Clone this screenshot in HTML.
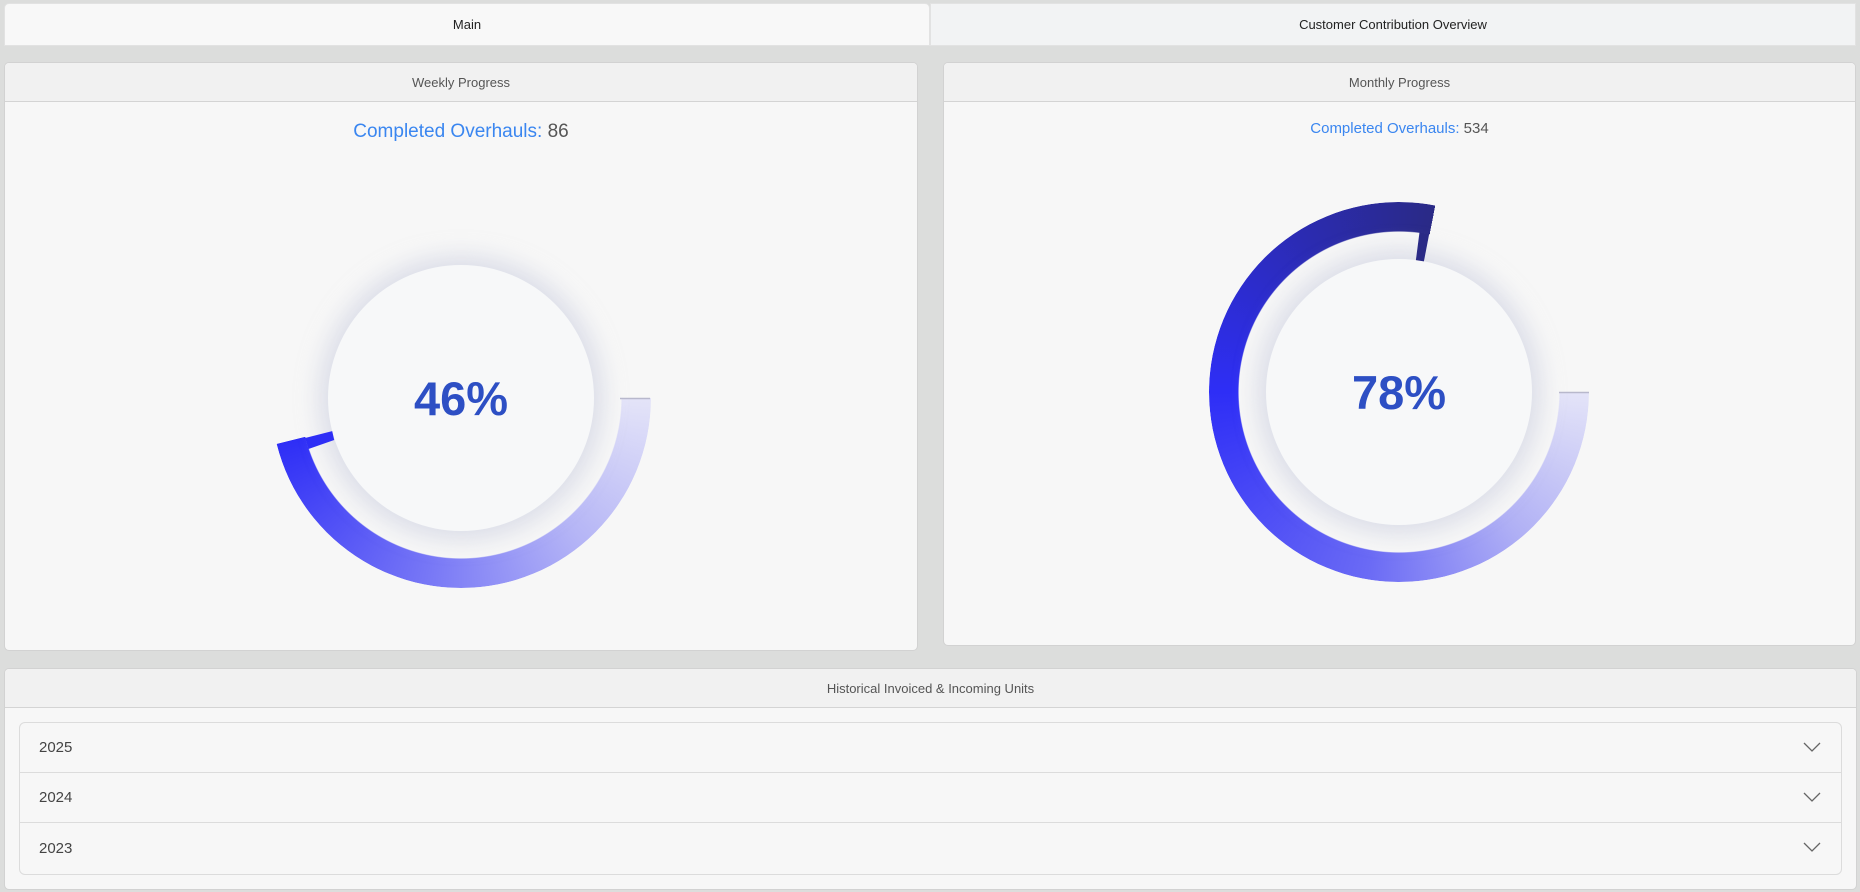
<!DOCTYPE html>
<html><head><meta charset="utf-8"><style>
*{box-sizing:border-box;margin:0;padding:0}
body{width:1860px;height:892px;background:#dcdddc;font-family:"Liberation Sans",sans-serif;position:relative;overflow:hidden}
.abs{position:absolute}
.tab{position:absolute;top:3px;height:43px;display:flex;align-items:center;justify-content:center;font-size:13px;color:#222;border:1px solid #e2e2e2}
.panel{position:absolute;background:#f7f7f7;border:1px solid #d2d2d2;border-radius:5px;overflow:hidden}
.ph{height:39px;background:#f1f1f1;border-bottom:1px solid #d4d4d4;display:flex;align-items:center;justify-content:center;font-size:13px;color:#555}
.ring{position:absolute;width:380px;height:380px;border-radius:50%;-webkit-mask:radial-gradient(circle,transparent 160px,#000 161px);mask:radial-gradient(circle,transparent 160px,#000 161px)}
.circ{position:absolute;width:266px;height:266px;border-radius:50%;background:#f7f8f9;box-shadow:0 0 22px 10px rgba(200,204,222,.55);display:flex;align-items:center;justify-content:center;font-weight:bold;font-size:47px;color:#2d4fc4}
.co{position:absolute;text-align:center;color:#555}
.co span{color:#3a86f0}
.acc{position:absolute;left:19px;top:722px;width:1823px;height:153px;border:1px solid #dcdcdc;border-radius:6px;background:#f7f7f7}
.row{height:50px;border-bottom:1px solid #dcdcdc;display:flex;align-items:center;padding-left:19px;font-size:15px;color:#444;position:relative}
.row:last-child{border-bottom:none}
.row svg{position:absolute;right:20px;top:19px}
</style></head><body>
<div class="tab" style="left:4px;width:926px;background:#f8f8f8;border-radius:5px 5px 0 0">Main</div>
<div class="tab" style="left:930px;width:926px;background:#f2f3f4">Customer Contribution Overview</div>

<div class="panel" style="left:4px;top:62px;width:914px;height:589px"><div class="ph">Weekly Progress</div></div>
<div class="panel" style="left:943px;top:62px;width:913px;height:584px"><div class="ph">Monthly Progress</div></div>

<div class="co" style="left:4px;width:914px;top:121px;font-size:19px">
<span>Completed Overhauls:</span> 86</div>
<div class="co" style="left:943px;width:913px;top:120px;font-size:15px">
<span>Completed Overhauls:</span> 534</div>

<div class="ring" style="left:271px;top:208px;background:conic-gradient(from 90deg,#e4e4f8 0deg,#b5b5f6 50deg,#7878f6 100deg,#2e2ef6 166deg,transparent 166deg)"></div>
<div class="circ" style="left:328px;top:265px">46%</div>

<div class="ring" style="left:1209px;top:202px;background:conic-gradient(from 90deg,#e4e4f8 0deg,#b0b0f5 50deg,#6a6af5 100deg,#2e2ef6 180deg,#2b2bb0 240deg,#2a2a86 281deg,transparent 281deg)"></div>
<div class="circ" style="left:1266px;top:259px">78%</div>

<svg class="abs" style="left:0;top:0" width="1860" height="892">
<polygon points="332.2,431.1 305.1,438 308.5,449 334.2,440" fill="#2e2ef6"/>
<polygon points="1423.9,261.4 1429.2,233.9 1419.5,232.3 1415.9,260.1" fill="#2a2a86"/>
<line x1="620" y1="398.5" x2="650" y2="398.5" stroke="#b8b8cc" stroke-width="1.5"/>
<line x1="1559" y1="392.5" x2="1589" y2="392.5" stroke="#b8b8cc" stroke-width="1.5"/>
</svg>

<div class="panel" style="left:4px;top:668px;width:1853px;height:222px"><div class="ph">Historical Invoiced &amp; Incoming Units</div></div>
<div class="acc">
<div class="row">2025<svg width="18" height="10" viewBox="0 0 18 10"><path d="M1 1 L9 9 L17 1" fill="none" stroke="#666" stroke-width="1.3"/></svg></div>
<div class="row">2024<svg width="18" height="10" viewBox="0 0 18 10"><path d="M1 1 L9 9 L17 1" fill="none" stroke="#666" stroke-width="1.3"/></svg></div>
<div class="row">2023<svg width="18" height="10" viewBox="0 0 18 10"><path d="M1 1 L9 9 L17 1" fill="none" stroke="#666" stroke-width="1.3"/></svg></div>
</div>
</body></html>
